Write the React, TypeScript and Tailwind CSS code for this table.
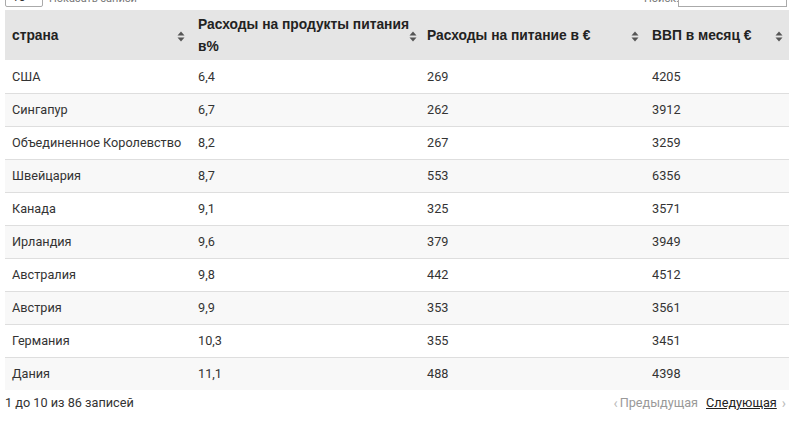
import React from "react";

const rows: [string, string, string, string][] = [
  ["США", "6,4", "269", "4205"],
  ["Сингапур", "6,7", "262", "3912"],
  ["Объединенное Королевство", "8,2", "267", "3259"],
  ["Швейцария", "8,7", "553", "6356"],
  ["Канада", "9,1", "325", "3571"],
  ["Ирландия", "9,6", "379", "3949"],
  ["Австралия", "9,8", "442", "4512"],
  ["Австрия", "9,9", "353", "3561"],
  ["Германия", "10,3", "355", "3451"],
  ["Дания", "11,1", "488", "4398"],
];

const widths = ["w-[186px]", "w-[229px]", "w-[225px]", "w-[144px]"];

function SortIcon() {
  return (
    <svg width="8" height="11" viewBox="0 0 8 11" className="shrink-0">
      <path d="M4 0.5 L7.5 4.5 H0.5 Z" fill="#555" />
      <path d="M4 10.5 L7.5 6.5 H0.5 Z" fill="#555" />
    </svg>
  );
}

function Th({ children, w }: { children: React.ReactNode; w: string }) {
  return (
    <div className={`${w} shrink-0 flex items-center justify-between pl-[7px] pr-[6px] pt-[2px]`}>
      <div className="font-bold text-[13.8px] leading-[22px] text-[#222] whitespace-nowrap">{children}</div>
      <SortIcon />
    </div>
  );
}

export default function App() {
  return (
    <div className="w-[800px] h-[421px] overflow-hidden bg-white" style={{ fontFamily: "Roboto, 'Liberation Sans', sans-serif" }}>
      <div className="h-[10px] relative overflow-hidden">
        <div className="absolute left-[5px] top-[-13px] w-[38px] h-[20px] border border-[#aaa] rounded-[2px] text-[12px] text-[#333] pl-[6px] leading-[18px] flex items-center justify-between pr-[4px]">
          <span>10</span>
          <span className="text-[8px]">▼</span>
        </div>
        <div className="absolute left-[49px] top-[-7px] text-[11px] text-[#777] leading-[12px]">Показать записи</div>
        <div className="absolute left-[644px] top-[-7px] text-[11px] text-[#777] leading-[12px]">Поиск:</div>
        <div className="absolute left-[678px] top-[-14px] w-[109px] h-[21px] border border-[#aaa] bg-white" />
      </div>
      <div className="ml-[5px] w-[784px]">
        <div className="flex h-[50px] bg-[#e5e5e5]" style={{ fontFamily: "'Liberation Sans', Arial, sans-serif" }}>
          <Th w={widths[0]}>страна</Th>
          <Th w={widths[1]}>
            Расходы на продукты питания
            <br />в%
          </Th>
          <Th w={widths[2]}>Расходы на питание в €</Th>
          <Th w={widths[3]}>ВВП в месяц €</Th>
        </div>
        {rows.map((r, i) => (
          <div
            key={i}
            className={`flex h-[33px] items-center text-[12.7px] text-[#333] ${i > 0 ? "border-t border-[#dedede]" : ""} ${i % 2 === 1 ? "bg-[#f8f8f8]" : "bg-white"}`}
          >
            {r.map((c, j) => (
              <div key={j} className={`${widths[j]} shrink-0 pl-[7px] whitespace-nowrap`}>
                {c}
              </div>
            ))}
          </div>
        ))}
      </div>
      <div className="flex items-center justify-between mt-[3px] pl-[5px] pr-[14px] text-[12.7px] text-[#333] h-[20px]">
        <span>1 до 10 из 86 записей</span>
        <div className="flex items-center">
          <span className="text-[#bbb] text-[14px] mr-[2px]">‹</span>
          <span className="text-[#999]">Предыдущая</span>
          <span className="ml-[8px] underline text-[#222]">Следующая</span>
          <span className="text-[#bbb] text-[14px] ml-[5px]">›</span>
        </div>
      </div>
    </div>
  );
}
